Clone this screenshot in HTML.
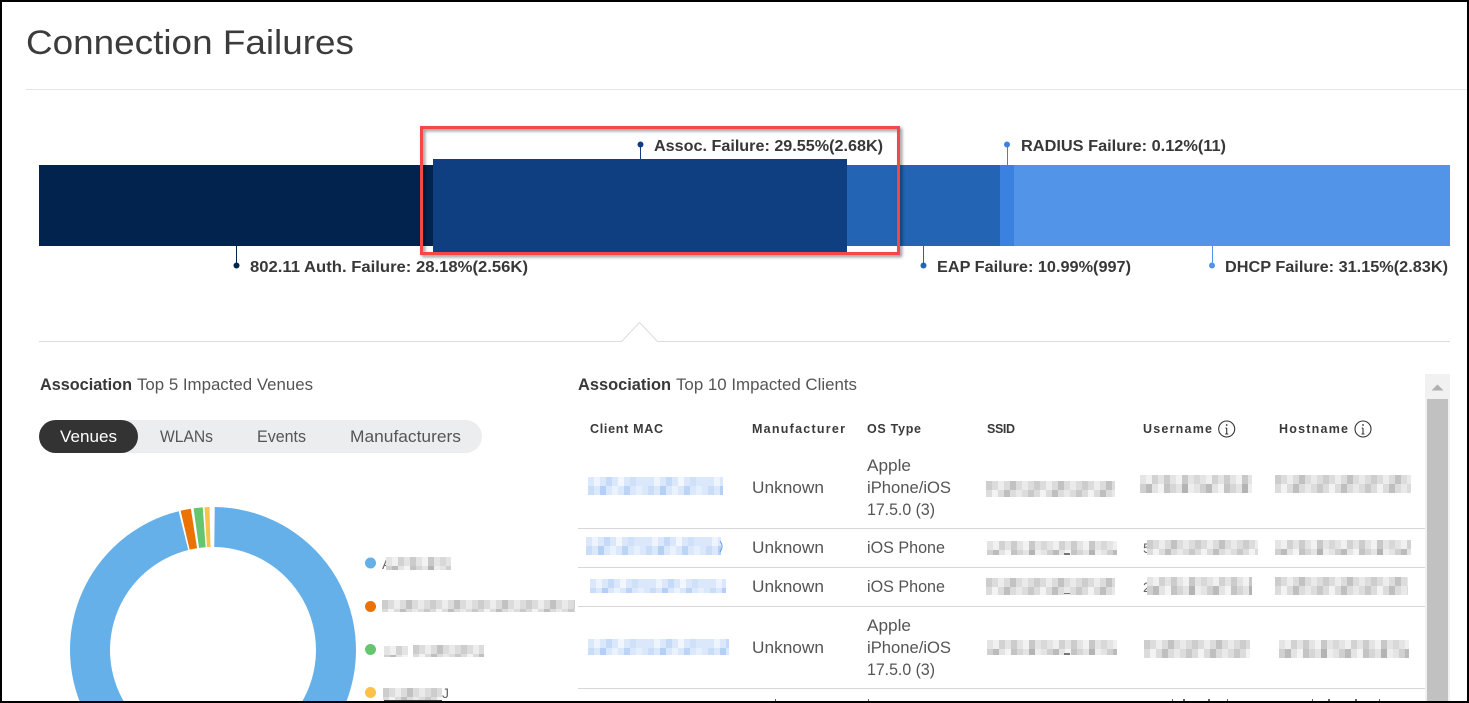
<!DOCTYPE html>
<html lang="en">
<head>
<meta charset="utf-8">
<title>Connection Failures</title>
<style>
html,body{margin:0;padding:0;background:#fff;width:1469px;height:703px;overflow:hidden;}
body{position:relative;}
svg{position:absolute;left:0;top:0;display:block;overflow:hidden;}
text{font-family:"Liberation Sans",Arial,sans-serif;}
.t{font-size:16.5px;fill:#555;}
.b{font-size:15.5px;font-weight:bold;fill:#383838;}
.s{font-size:16.5px;font-weight:bold;fill:#383838;}
.h{font-size:12.5px;font-weight:bold;fill:#3a3a3a;}
</style>
</head>
<body>
<svg width="1469" height="703" viewBox="0 0 1469 703" xmlns="http://www.w3.org/2000/svg">
<defs>
<pattern id="g1" patternUnits="userSpaceOnUse" width="60" height="18" shape-rendering="crispEdges">
<rect width="60" height="18" fill="#e4e4e4"/>
<rect x="6" width="6" height="9" fill="#f0f0f0"/><rect x="12" width="6" height="9" fill="#d2d2d2"/><rect x="24" width="6" height="9" fill="#ccc"/><rect x="36" width="6" height="9" fill="#f2f2f2"/><rect x="42" width="6" height="9" fill="#c8c8c8"/><rect x="54" width="6" height="9" fill="#d8d8d8"/>
<rect y="9" width="6" height="9" fill="#d0d0d0"/><rect x="6" y="9" width="6" height="9" fill="#bbb"/><rect x="18" y="9" width="6" height="9" fill="#f4f4f4"/><rect x="24" y="9" width="6" height="9" fill="#c4c4c4"/><rect x="30" y="9" width="6" height="9" fill="#d6d6d6"/><rect x="42" y="9" width="6" height="9" fill="#b4b4b4"/><rect x="48" y="9" width="6" height="9" fill="#eee"/>
</pattern>
<pattern id="g2" patternUnits="userSpaceOnUse" width="48" height="18" shape-rendering="crispEdges">
<rect width="48" height="18" fill="#dcdcdc"/>
<rect width="6" height="9" fill="#cdcdcd"/><rect x="12" width="6" height="9" fill="#ededed"/><rect x="24" width="6" height="9" fill="#c2c2c2"/><rect x="36" width="6" height="9" fill="#eaeaea"/>
<rect x="6" y="9" width="6" height="9" fill="#f3f3f3"/><rect x="18" y="9" width="6" height="9" fill="#bfbfbf"/><rect x="30" y="9" width="6" height="9" fill="#e9e9e9"/><rect x="42" y="9" width="6" height="9" fill="#c9c9c9"/>
</pattern>
<pattern id="b1" patternUnits="userSpaceOnUse" width="60" height="18" shape-rendering="crispEdges">
<rect width="60" height="18" fill="#dbe8fb"/>
<rect x="6" width="6" height="9" fill="#eef4fd"/><rect x="18" width="6" height="9" fill="#c4daf8"/><rect x="30" width="6" height="9" fill="#f2f7fe"/><rect x="42" width="6" height="9" fill="#cfe1f9"/>
<rect y="9" width="6" height="9" fill="#c9ddf8"/><rect x="12" y="9" width="6" height="9" fill="#b5d0f6"/><rect x="24" y="9" width="6" height="9" fill="#eaf2fd"/><rect x="36" y="9" width="6" height="9" fill="#bcd5f7"/><rect x="48" y="9" width="6" height="9" fill="#e6effc"/>
</pattern>
</defs>

<rect width="1469" height="703" fill="#fff"/>

<!-- Title -->
<text x="26" y="54" font-size="34" fill="#3c3c3c" textLength="328" lengthAdjust="spacingAndGlyphs">Connection Failures</text>
<rect x="26" y="89" width="1441" height="1" fill="#e6e6e6"/>

<!-- Bar -->
<rect x="39" y="165" width="394" height="81" fill="#03234f"/>
<rect x="433" y="165" width="414" height="81" fill="#0f3f80"/>
<rect x="847" y="165" width="153" height="81" fill="#2364b4"/>
<rect x="1000" y="165" width="14" height="81" fill="#3b82e0"/>
<rect x="1014" y="165" width="436" height="81" fill="#5295e8"/>

<!-- Leaders -->
<g>
<rect x="236" y="246" width="1" height="18" fill="#03234f"/><circle cx="236.5" cy="265.5" r="3" fill="#03234f"/>
<rect x="640" y="146" width="1" height="14" fill="#0f3f80"/><circle cx="640.5" cy="144.5" r="3" fill="#0f3f80"/>
<rect x="1007" y="146" width="1" height="19" fill="#3b82e0"/><circle cx="1007" cy="144.5" r="3" fill="#3b82e0"/>
<rect x="923" y="246" width="1" height="18" fill="#2364b4"/><circle cx="923.5" cy="265.5" r="3" fill="#2364b4"/>
<rect x="1212" y="246" width="1" height="18" fill="#5295e8"/><circle cx="1212" cy="265.5" r="3" fill="#5295e8"/>
</g>
<text class="b" x="250" y="272" textLength="278" lengthAdjust="spacingAndGlyphs">802.11 Auth. Failure: 28.18%(2.56K)</text>
<text class="b" x="654" y="151" textLength="229" lengthAdjust="spacingAndGlyphs">Assoc. Failure: 29.55%(2.68K)</text>
<text class="b" x="1021" y="151" textLength="205" lengthAdjust="spacingAndGlyphs">RADIUS Failure: 0.12%(11)</text>
<text class="b" x="937" y="272" textLength="194" lengthAdjust="spacingAndGlyphs">EAP Failure: 10.99%(997)</text>
<text class="b" x="1225" y="272" textLength="223" lengthAdjust="spacingAndGlyphs">DHCP Failure: 31.15%(2.83K)</text>

<!-- Red highlight box -->
<rect x="421.5" y="127.5" width="477" height="126" fill="none" stroke="#f4474a" stroke-width="3" style="filter:drop-shadow(2px 2px 1.5px rgba(0,0,0,.45))"/>
<rect x="433" y="159" width="414" height="93" fill="#0f3f80"/>

<!-- Divider with notch -->
<path d="M39 341.5H621.5L639.5 322.5L657.5 341.5H1450" fill="none" stroke="#dcdcdc" stroke-width="1"/>

<!-- Left panel -->
<text class="s" x="40" y="390" textLength="92" lengthAdjust="spacingAndGlyphs">Association</text>
<text class="t" x="137" y="390" textLength="176" lengthAdjust="spacingAndGlyphs">Top 5 Impacted Venues</text>

<rect x="39" y="420" width="443" height="33" rx="16.5" fill="#ecedef"/>
<rect x="39" y="420" width="99" height="33" rx="16.5" fill="#333"/>
<text x="60" y="442" font-size="16.5" fill="#fff" textLength="57" lengthAdjust="spacingAndGlyphs">Venues</text>
<text class="t" x="160" y="442" textLength="53" lengthAdjust="spacingAndGlyphs">WLANs</text>
<text class="t" x="257" y="442" textLength="49" lengthAdjust="spacingAndGlyphs">Events</text>
<text class="t" x="350" y="442" textLength="111" lengthAdjust="spacingAndGlyphs">Manufacturers</text>

<!-- Donut, truncated at the frame edge -->
<path d="M214.75 507.01A143 143 0 0 1 345.8 703L301.3 703A103 103 0 0 0 214.26 547Z" fill="#65b0e9"/>
<path d="M80.2 703A143 143 0 0 1 178.65 511.19L188.26 550.02A103 103 0 0 0 124.7 703Z" fill="#65b0e9"/>
<g fill="none" stroke-width="40">
<path d="M185.12 530.2A123 123 0 0 1 193.97 528.48" stroke="#ee7203"/>
<path d="M196.31 528.14A123 123 0 0 1 204.21 527.31" stroke="#66c670"/>
<path d="M205.71 527.22A123 123 0 0 1 209.99 527.04" stroke="#fcc14a"/>
</g>

<!-- Legend -->
<circle cx="370.5" cy="563" r="5.5" fill="#65b0e9"/>
<circle cx="370.5" cy="606.5" r="5.5" fill="#ee7203"/>
<circle cx="370.5" cy="649.5" r="5.5" fill="#66c670"/>
<circle cx="370.5" cy="692.5" r="5.5" fill="#fcc14a"/>
<text x="382" y="569" font-size="14" fill="#666">A</text>
<text x="442" y="698" font-size="14" fill="#666">J</text>
<rect transform="translate(386,557)" width="65" height="13" fill="url(#g1)"/>
<rect transform="translate(382,600)" width="193" height="12" fill="url(#g2)"/>
<rect transform="translate(384,646)" width="24" height="11" fill="url(#g1)"/>
<rect transform="translate(413,645)" width="71" height="12" fill="url(#g2)"/>
<rect transform="translate(383,688)" width="59" height="12" fill="url(#g2)"/>
<rect x="384" y="700" width="58" height="1" fill="#444"/>

<!-- Right panel -->
<text class="s" x="578" y="390" textLength="93" lengthAdjust="spacingAndGlyphs">Association</text>
<text class="t" x="676" y="390" textLength="181" lengthAdjust="spacingAndGlyphs">Top 10 Impacted Clients</text>

<text class="h" x="590" y="433" textLength="73" lengthAdjust="spacing">Client MAC</text>
<text class="h" x="752" y="433" textLength="93" lengthAdjust="spacing">Manufacturer</text>
<text class="h" x="867" y="433" textLength="54" lengthAdjust="spacing">OS Type</text>
<text class="h" x="987" y="433" textLength="28" lengthAdjust="spacing">SSID</text>
<text class="h" x="1143" y="433" textLength="69" lengthAdjust="spacing">Username</text>
<text class="h" x="1279" y="433" textLength="69" lengthAdjust="spacing">Hostname</text>
<g fill="none" stroke="#333" stroke-width="1.1">
<circle cx="1226.7" cy="429" r="8"/><path d="M1226.7 428V434M1225.4 428H1226.7M1225.2 434H1228.2"/>
<circle cx="1363" cy="429" r="8"/><path d="M1363 428V434M1361.7 428H1363M1361.5 434H1364.5"/>
</g>
<circle cx="1226.7" cy="425" r="0.9" fill="#333"/><circle cx="1363" cy="425" r="0.9" fill="#333"/>

<!-- Row lines -->
<g fill="#d8d8d8">
<rect x="578" y="528" width="847" height="1"/>
<rect x="578" y="567" width="847" height="1"/>
<rect x="578" y="606" width="847" height="1"/>
<rect x="578" y="688" width="847" height="1"/>
</g>

<!-- Rows -->
<text class="t" x="752" y="493" textLength="72" lengthAdjust="spacingAndGlyphs">Unknown</text>
<text class="t" x="867" y="471" textLength="44" lengthAdjust="spacingAndGlyphs">Apple</text>
<text class="t" x="867" y="493" textLength="84" lengthAdjust="spacingAndGlyphs">iPhone/iOS</text>
<text class="t" x="867" y="515" textLength="68" lengthAdjust="spacingAndGlyphs">17.5.0 (3)</text>

<text class="t" x="752" y="553" textLength="72" lengthAdjust="spacingAndGlyphs">Unknown</text>
<text class="t" x="867" y="553" textLength="78" lengthAdjust="spacingAndGlyphs">iOS Phone</text>

<text class="t" x="752" y="592" textLength="72" lengthAdjust="spacingAndGlyphs">Unknown</text>
<text class="t" x="867" y="592" textLength="78" lengthAdjust="spacingAndGlyphs">iOS Phone</text>

<text class="t" x="752" y="653" textLength="72" lengthAdjust="spacingAndGlyphs">Unknown</text>
<text class="t" x="867" y="631" textLength="44" lengthAdjust="spacingAndGlyphs">Apple</text>
<text class="t" x="867" y="653" textLength="84" lengthAdjust="spacingAndGlyphs">iPhone/iOS</text>
<text class="t" x="867" y="675" textLength="68" lengthAdjust="spacingAndGlyphs">17.5.0 (3)</text>

<!-- Tops of the next row, cut off by the frame -->
<g fill="#666">
<rect x="775" y="699" width="1" height="2"/>
<rect x="868" y="699" width="1" height="2"/>
<rect x="1172" y="699" width="1" height="2"/><rect x="1183" y="699" width="2" height="2"/><rect x="1208" y="699" width="2" height="2"/><rect x="1227" y="699" width="1" height="2"/>
<rect x="1312" y="699" width="1" height="2"/><rect x="1328" y="699" width="2" height="2"/><rect x="1355" y="699" width="2" height="2"/><rect x="1379" y="699" width="1" height="2"/>
</g>

<!-- Obscured cells -->
<rect transform="translate(588,477)" width="135" height="18" fill="url(#b1)"/>
<rect transform="translate(586,537)" width="135" height="18" fill="url(#b1)"/>
<rect transform="translate(590,579)" width="136" height="14" fill="url(#b1)"/>
<rect transform="translate(588,639)" width="141" height="16" fill="url(#b1)"/>
<path d="M720 541Q724 546 720 552" fill="none" stroke="#5a9df0" stroke-width="1"/>

<rect transform="translate(986,481)" width="129" height="16" fill="url(#g2)"/>
<rect transform="translate(987,541)" width="130" height="14" fill="url(#g1)"/>
<rect transform="translate(986,578)" width="129" height="17" fill="url(#g2)"/>
<rect transform="translate(987,640)" width="130" height="15" fill="url(#g1)"/>
<rect x="1064" y="553" width="6" height="2" fill="#777"/>
<rect x="1064" y="593" width="6" height="1" fill="#777"/>
<rect x="1064" y="653" width="6" height="2" fill="#777"/>

<text x="1143" y="553" font-size="14" fill="#666">5</text>
<text x="1143" y="592" font-size="14" fill="#666">2</text>
<rect transform="translate(1140,475)" width="112" height="18" fill="url(#g1)"/>
<rect transform="translate(1147,540)" width="111" height="15" fill="url(#g2)"/>
<rect transform="translate(1147,577)" width="105" height="18" fill="url(#g1)"/>
<rect transform="translate(1144,640)" width="106" height="18" fill="url(#g2)"/>

<rect transform="translate(1275,475)" width="136" height="18" fill="url(#g2)"/>
<rect transform="translate(1275,540)" width="136" height="15" fill="url(#g1)"/>
<rect transform="translate(1275,577)" width="133" height="18" fill="url(#g2)"/>
<rect transform="translate(1279,640)" width="130" height="18" fill="url(#g1)"/>

<!-- Scrollbar -->
<rect x="1425" y="374" width="25" height="327" fill="#f1f1f1"/>
<rect x="1427" y="399" width="21" height="302" fill="#c1c1c1"/>
<path d="M1431.5 390.5L1437.5 384.5L1443.5 390.5Z" fill="#b0b0b0"/>

<!-- Screenshot frame -->
<rect x="1" y="1" width="1467" height="701" fill="none" stroke="#000" stroke-width="2"/>
</svg>
</body>
</html>
